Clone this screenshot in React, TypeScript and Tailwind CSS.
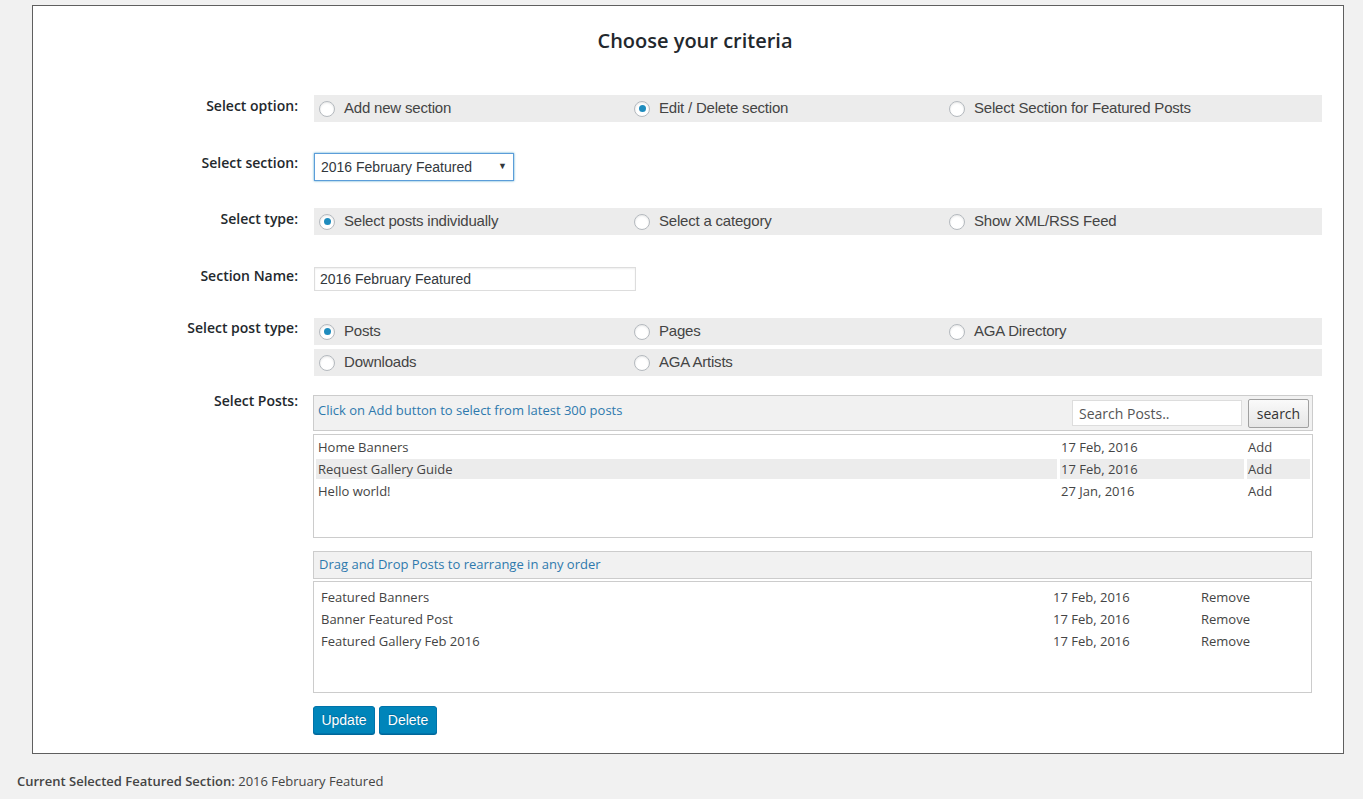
import React from "react";

const sans = "font-['Open_Sans',sans-serif]";
const arial = "font-['Liberation_Sans',Arial,sans-serif]";

type Opt = { label: string; checked?: boolean };

function Radio({ label, checked }: Opt) {
  return (
    <label className="flex w-[315px] items-center pl-[5px]">
      <span className="flex h-[16px] w-[16px] items-center justify-center rounded-full border border-[#b4b9be] bg-white shadow-[inset_0_1px_2px_rgba(0,0,0,0.1)]">
        {checked && <span className="h-[7px] w-[7px] rounded-full bg-[#1e8cbe]" />}
      </span>
      <span className={`ml-[9px] text-[15px] tracking-[-0.2px] text-[#444] ${arial}`}>{label}</span>
    </label>
  );
}

function RadioRow({ options }: { options: Opt[] }) {
  return (
    <div className="flex h-[27px] w-[1008px] items-center bg-[#ececec]">
      {options.map((o) => (
        <Radio key={o.label} {...o} />
      ))}
    </div>
  );
}

function Row({ label, pt, mt, children }: { label: string; pt: string; mt: string; children: React.ReactNode }) {
  return (
    <div className={`flex ${mt}`}>
      <div className={`w-[265px] text-right text-[14px] leading-[20px] font-semibold text-[#23282d] ${sans} ${pt}`}>
        {label}
      </div>
      <div className="ml-[16px]">{children}</div>
    </div>
  );
}

const latest = [
  { title: "Home Banners", date: "17 Feb, 2016" },
  { title: "Request Gallery Guide", date: "17 Feb, 2016", hl: true },
  { title: "Hello world!", date: "27 Jan, 2016" },
];

const chosen = [
  { title: "Featured Banners", date: "17 Feb, 2016" },
  { title: "Banner Featured Post", date: "17 Feb, 2016" },
  { title: "Featured Gallery Feb 2016", date: "17 Feb, 2016" },
];

export default function App() {
  return (
    <div className="min-h-[799px] bg-[#f1f1f1] pt-[5px]">
      <div className="ml-[32px] w-[1312px] border border-[#5f5f5f] bg-white pb-[19px]">
        <h2 className={`pl-[14px] pt-[21px] text-center text-[20px] leading-[28px] font-semibold text-[#23282d] ${sans}`}>
          Choose your criteria
        </h2>

        <Row label="Select option:" pt="pt-[1px]" mt="mt-[40px]">
          <RadioRow
            options={[
              { label: "Add new section" },
              { label: "Edit / Delete section", checked: true },
              { label: "Select Section for Featured Posts" },
            ]}
          />
        </Row>

        <Row label="Select section:" pt="pt-0" mt="mt-[31px]">
          <div className="relative h-[28px] w-[200px]">
            <select
              defaultValue="2016 February Featured"
              className={`h-full w-full appearance-none border border-[#5b9dd9] bg-white pl-[6px] text-[14px] text-[#32373c] shadow-[0_0_2px_rgba(30,140,190,0.8)] outline-none ${arial}`}
            >
              <option>2016 February Featured</option>
            </select>
            <span className="pointer-events-none absolute right-[7px] top-[6px] text-[9px] text-[#32373c]">▼</span>
          </div>
        </Row>

        <Row label="Select type:" pt="pt-[1px]" mt="mt-[27px]">
          <RadioRow
            options={[
              { label: "Select posts individually", checked: true },
              { label: "Select a category" },
              { label: "Show XML/RSS Feed" },
            ]}
          />
        </Row>

        <Row label="Section Name:" pt="pt-0" mt="mt-[31px]">
          <input
            defaultValue="2016 February Featured"
            className={`h-[24px] w-[322px] border border-[#ddd] bg-white pl-[5px] text-[14px] text-[#32373c] shadow-[inset_0_1px_2px_rgba(0,0,0,0.07)] outline-none ${arial}`}
          />
        </Row>

        <Row label="Select post type:" pt="pt-0" mt="mt-[27px]">
          <div className="flex flex-col gap-[4px]">
            <RadioRow options={[{ label: "Posts", checked: true }, { label: "Pages" }, { label: "AGA Directory" }]} />
            <RadioRow options={[{ label: "Downloads" }, { label: "AGA Artists" }]} />
          </div>
        </Row>

        <Row label="Select Posts:" pt="pt-0" mt="mt-[15px]">
          <div className={`-ml-[1px] w-[1000px] pt-[4px] ${sans}`}>
            <div className="flex h-[36px] items-center justify-between border border-[#ccc] bg-[#f1f1f1] pl-[4px] pr-[3px]">
              <span className="mt-[4px] self-start text-[13px] leading-[20px] text-[#2e79ad]">
                Click on Add button to select from latest 300 posts
              </span>
              <div className="flex items-center gap-[6px]">
                <input
                  placeholder="Search Posts.."
                  className="h-[26px] w-[170px] border border-[#ddd] bg-white pl-[6px] text-[14px] text-[#555] outline-none placeholder:text-[#555]"
                />
                <button className="h-[29px] w-[61px] rounded-[2px] border border-[#a0a0a0] bg-gradient-to-b from-[#fafafa] to-[#e6e6e6] text-[14px] text-[#333]">
                  search
                </button>
              </div>
            </div>

            <div className="mt-[3px] h-[104px] border border-[#ccc] bg-white p-[2px]">
              <div className="grid grid-cols-[741px_184px_63px] gap-x-[3px] gap-y-[2px] text-[13px] leading-[20px] text-[#444]">
                {latest.map((p) => (
                  <React.Fragment key={p.title}>
                    <div className={`pl-[2px] ${p.hl ? "bg-[#ececec]" : ""}`}>{p.title}</div>
                    <div className={`pl-[1px] ${p.hl ? "bg-[#ececec]" : ""}`}>{p.date}</div>
                    <div className={`pl-[1px] ${p.hl ? "bg-[#ececec]" : ""}`}>Add</div>
                  </React.Fragment>
                ))}
              </div>
            </div>

            <div className="mt-[13px] flex h-[28px] w-[999px] items-center border border-[#ccc] bg-[#f1f1f1] pl-[5px]">
              <span className="text-[13px] text-[#2e79ad]">Drag and Drop Posts to rearrange in any order</span>
            </div>

            <div className="mt-[2px] h-[112px] w-[999px] border border-[#ccc] bg-white pl-[7px] pt-[5px]">
              <div className="grid grid-cols-[732px_148px_auto] gap-y-[2px] text-[13px] leading-[20px] text-[#444]">
                {chosen.map((p) => (
                  <React.Fragment key={p.title}>
                    <div>{p.title}</div>
                    <div>{p.date}</div>
                    <div>Remove</div>
                  </React.Fragment>
                ))}
              </div>
            </div>

            <div className={`mt-[13px] flex gap-[4px] ${arial}`}>
              <button className="h-[28px] w-[62px] rounded-[3px] border border-[#0073aa] bg-[#0085ba] text-[14px] text-white shadow-[0_1px_0_#006799] [text-shadow:0_-1px_1px_#006799]">
                Update
              </button>
              <button className="h-[28px] w-[58px] rounded-[3px] border border-[#0073aa] bg-[#0085ba] text-[14px] text-white shadow-[0_1px_0_#006799] [text-shadow:0_-1px_1px_#006799]">
                Delete
              </button>
            </div>
          </div>
        </Row>
      </div>

      <p className={`ml-[17px] mt-[17px] text-[13px] leading-[20px] text-[#444] ${sans}`}>
        <span className="font-semibold">Current Selected Featured Section:</span> 2016 February Featured
      </p>
    </div>
  );
}
